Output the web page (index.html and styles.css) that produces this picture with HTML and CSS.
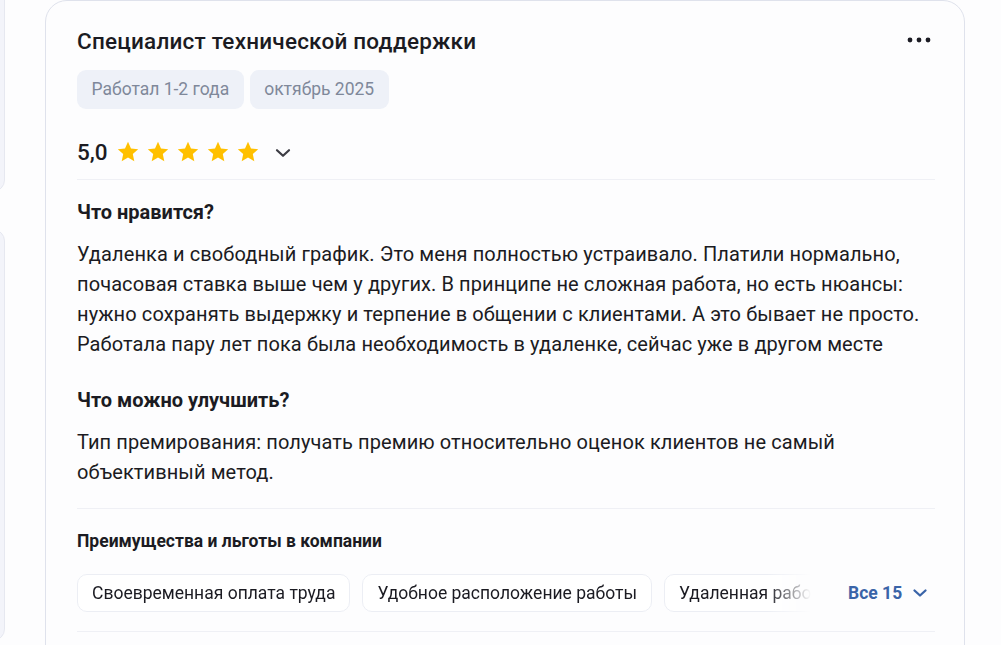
FILE: index.html
```html
<!DOCTYPE html>
<html lang="ru">
<head>
<meta charset="utf-8">
<link rel="stylesheet" href="styles.css">
</head>
<body>
<div class="page">
  <aside class="side">
    <div class="side-card side-card--top"></div>
    <div class="side-card side-card--bottom"></div>
  </aside>
  <main class="review">
    <div class="head">
      <h1 class="title">Специалист технической поддержки</h1>
      <button class="more" aria-label="Ещё">
        <svg width="24" height="6" viewBox="0 0 24 6"><circle cx="3" cy="3" r="2.4" fill="#1c1c24"/><circle cx="12" cy="3" r="2.4" fill="#1c1c24"/><circle cx="21" cy="3" r="2.4" fill="#1c1c24"/></svg>
      </button>
    </div>
    <div class="tags">
      <span class="tag">Работал 1-2 года</span>
      <span class="tag">октябрь 2025</span>
    </div>
    <div class="rating">
      <span class="score">5,0</span>
      <span class="stars">
        <svg class="star" viewBox="0 0 24 24"><path d="M12 1.8l3 6.6 7.2.8-5.4 4.9 1.5 7.1L12 17.6l-6.3 3.6 1.5-7.1L1.8 9.2 9 8.4z"/></svg>
        <svg class="star" viewBox="0 0 24 24"><path d="M12 1.8l3 6.6 7.2.8-5.4 4.9 1.5 7.1L12 17.6l-6.3 3.6 1.5-7.1L1.8 9.2 9 8.4z"/></svg>
        <svg class="star" viewBox="0 0 24 24"><path d="M12 1.8l3 6.6 7.2.8-5.4 4.9 1.5 7.1L12 17.6l-6.3 3.6 1.5-7.1L1.8 9.2 9 8.4z"/></svg>
        <svg class="star" viewBox="0 0 24 24"><path d="M12 1.8l3 6.6 7.2.8-5.4 4.9 1.5 7.1L12 17.6l-6.3 3.6 1.5-7.1L1.8 9.2 9 8.4z"/></svg>
        <svg class="star" viewBox="0 0 24 24"><path d="M12 1.8l3 6.6 7.2.8-5.4 4.9 1.5 7.1L12 17.6l-6.3 3.6 1.5-7.1L1.8 9.2 9 8.4z"/></svg>
      </span>
      <svg class="chev" width="16" height="10" viewBox="0 0 16 10"><path d="M2 2.2L8 7.8l6-5.6" fill="none" stroke="#3c3c44" stroke-width="2.2" stroke-linecap="round" stroke-linejoin="round"/></svg>
    </div>
    <section class="block">
      <h2 class="block-title">Что нравится?</h2>
      <p class="text">Удаленка и свободный график. Это меня полностью устраивало. Платили нормально, почасовая ставка выше чем у других. В принципе не сложная работа, но есть нюансы: нужно сохранять выдержку и терпение в общении с клиентами. А это бывает не просто. Работала пару лет пока была необходимость в удаленке, сейчас уже в другом месте</p>
      <h2 class="block-title block-title--second">Что можно улучшить?</h2>
      <p class="text">Тип премирования: получать премию относительно оценок клиентов не самый объективный метод.</p>
    </section>
    <section class="perks">
      <h3 class="perks-title">Преимущества и льготы в компании</h3>
      <div class="perks-row">
        <div class="chips">
          <span class="chip">Своевременная оплата труда</span>
          <span class="chip">Удобное расположение работы</span>
          <span class="chip">Удаленная работа</span>
        </div>
        <button class="all">Все 15
          <svg width="16" height="10" viewBox="0 0 16 10"><path d="M2.5 2.5L8 7.5l5.5-5" fill="none" stroke="#3a64a8" stroke-width="2.3" stroke-linecap="round" stroke-linejoin="round"/></svg>
        </button>
      </div>
    </section>
  </main>
</div>
</body>
</html>
```
FILE: styles.css
```css
* { box-sizing: border-box; }
html, body { margin: 0; padding: 0; }
body {
  background: #fdfdfe;
  font-family: Roboto, "Liberation Sans", Arial, sans-serif;
  color: #1b1b22;
  overflow: hidden;
  height: 645px;
}
.page {
  display: flex;
  gap: 40px;
  align-items: flex-start;
}
.side {
  width: 5px;
  flex: none;
  display: flex;
  flex-direction: column;
  gap: 37px;
  overflow: hidden;
}
.side-card {
  width: 300px;
  margin-left: -295px;
  background: #f3f4fa;
  border: 1px solid #e6e8f0;
  border-radius: 12px;
}
.side-card--top { height: 212px; margin-top: -20px; }
.side-card--bottom { height: 412px; }

.review {
  flex: none;
  width: 920px;
  height: 700px;
  background: #fdfdfe;
  border: 1px solid #dfe2ec;
  border-radius: 22px;
  padding: 25px 29px 0 31px;
}
.head {
  display: flex;
  justify-content: space-between;
  align-items: center;
}
.title {
  margin: 0;
  font-size: 22.5px;
  font-weight: 500;
  line-height: 30px;
  letter-spacing: 0.22px;
}
.more {
  border: 0;
  background: none;
  padding: 0;
  margin-right: 4px;
  margin-top: -3px;
  display: flex;
}
.tags {
  display: flex;
  gap: 6px;
  margin-top: 14px;
}
.tag {
  background: #eef1f8;
  color: #7f889a;
  font-size: 17.5px;
  line-height: 39px;
  height: 39px;
  padding: 0 14.5px;
  border-radius: 9px;
}
.rating {
  display: flex;
  align-items: center;
  height: 71px;
  padding: 29px 0 13px;
  border-bottom: 1px solid #eff0f5;
}
.score {
  font-size: 22.5px;
  font-weight: 500;
  line-height: 28px;
  margin-right: 8px;
}
.stars { display: flex; gap: 6px; }
.star { width: 24px; height: 24px; fill: #ffc000; }
.chev { margin-left: 15px; margin-top: 1px; }

.block { border-bottom: 1px solid #eff0f5; padding: 20px 0 21px; }
.block-title {
  margin: 0;
  font-size: 20px;
  font-weight: 700;
  line-height: 25px;
}
.block-title--second { margin-top: 29px; }
.text {
  margin: 14px 0 0;
  font-size: 20px;
  line-height: 30px;
  letter-spacing: 0.1px;
}
.perks { padding-top: 21px; border-bottom: 1px solid #eff0f5; padding-bottom: 19px; }
.perks-title {
  margin: 0;
  font-size: 17.5px;
  font-weight: 700;
  line-height: 22px;
}
.perks-row {
  display: flex;
  align-items: center;
  margin-top: 22px;
}
.chips {
  display: flex;
  gap: 12px;
  width: 734px;
  overflow: hidden;
  -webkit-mask-image: linear-gradient(to right, #000 690px, transparent 734px);
  mask-image: linear-gradient(to right, #000 690px, transparent 734px);
}
.chip {
  flex: none;
  border: 1px solid #eceef4;
  border-radius: 10px;
  background: #fff;
  height: 38px;
  line-height: 36px;
  padding: 0 14px;
  font-size: 17.5px;
  color: #1b1b22;
}
.all {
  margin-left: 37px;
  border: 0;
  background: none;
  padding: 0;
  font-family: inherit;
  font-size: 17.5px;
  font-weight: 700;
  color: #3a64a8;
  display: flex;
  align-items: center;
  gap: 10px;
}
```
